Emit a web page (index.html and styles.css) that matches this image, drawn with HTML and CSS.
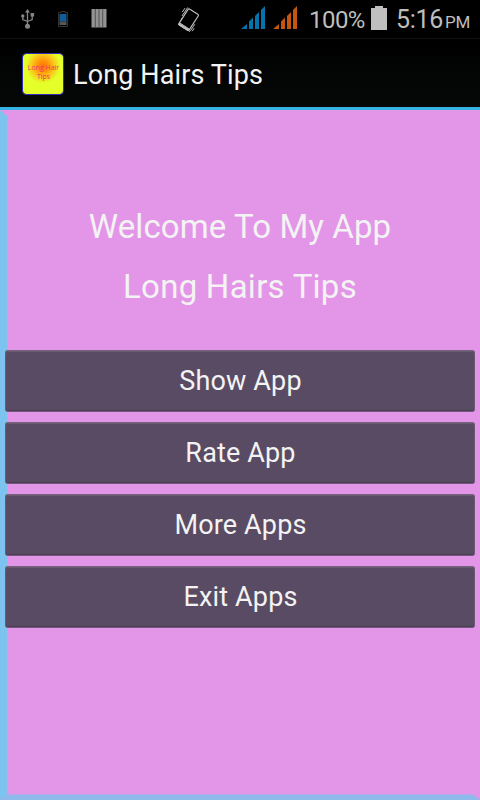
FILE: index.html
```html
<!DOCTYPE html>
<html lang="en">
<head>
<meta charset="utf-8">
<title>Long Hairs Tips</title>
<link rel="stylesheet" href="styles.css">
</head>
<body>
<div class="screen">
  <header class="status">
    <svg class="usb" width="14" height="20" viewBox="0 0 14 20" fill="none" stroke="#858585" stroke-width="1.3">
      <path d="M6.5 2v14M6.5 12.5L1.8 10.5V7M6.5 12.5l4.7-2V6"/>
      <path d="M4 3.5L6.5 0 9 3.5z" fill="#858585" stroke="none"/>
      <circle cx="6.5" cy="17.3" r="2.5" fill="#858585" stroke="none"/>
      <circle cx="1.8" cy="7" r="1.7" fill="#858585" stroke="none"/>
      <path d="M9.6 4h3.5v3.5H9.6z" fill="#858585" stroke="none"/>
    </svg>
    <svg class="cell" width="10" height="16" viewBox="0 0 10 16">
      <path d="M3 .5h4v1h2.5v14H.5v-14H3z" fill="#050505" stroke="#363330" stroke-width="1"/>
      <path d="M1.5 3h7v7.5h-7z" fill="#125c9c"/>
      <path d="M1.5 10.5h7V14h-7z" fill="#555"/>
    </svg>
    <svg class="bars" width="16" height="19" viewBox="0 0 16 19">
      <path d="M.5 0h15v18.5H.5z" fill="#939393"/>
      <path d="M4.3 0v19M8 0v19M11.7 0v19" stroke="#424242" stroke-width=".8"/>
    </svg>
    <svg class="vibrate" width="22" height="26" viewBox="0 0 22 26" fill="none" stroke="#bcbcbc">
      <path d="M11.5 2.1l8.3 5.2q1 .7.4 1.7l-9 13.8q-.7 1-1.7.4L1.4 18q-1-.7-.3-1.7L9.9 2.7q.6-1 1.6-.6z" stroke-width="1.2"/>
      <path d="M1.4 15.7l9.6 6.2-1.1 1.7L.7 17.8z" fill="#bcbcbc"/>
      <path d="M4 9l5.8-8.6M3.3 12.3L3.9 11M4.2 5.2L7 1.1M12.5 23.7l4.3-6.5M14.2 24.2l2-3M11 25l.9-1.3" stroke-width="1"/>
    </svg>
    <svg class="signal" width="24" height="23" viewBox="0 0 24 23" fill="#0674ac"><path d="M0 23l6-5v5zM8 23v-7.5l4-4V23zM14 23V10l4-4v17zM20 23V4l4-4v23z"/></svg>
    <svg class="signal second" width="24" height="23" viewBox="0 0 24 23" fill="#c5560e"><path d="M0 23l6-5v5zM8 23v-7.5l4-4V23zM14 23V10l4-4v17zM20 23V4l4-4v23z"/></svg>
    <span class="percent">100%</span>
    <svg class="battery" width="16" height="24" viewBox="0 0 16 24"><path d="M4 0h8v2h4v22H0V2h4z" fill="#bfbfbf"/></svg>
    <span class="clock">5:16</span><span class="meridiem">PM</span>
  </header>
  <div class="actionbar">
    <div class="logo"><span>Long Hair</span><span>Tips</span></div>
    <h1>Long Hairs Tips</h1>
  </div>
  <main>
    <svg class="edge" width="480" height="690" viewBox="0 0 480 690" aria-hidden="true">
      <path d="M0 0l7 6v679l-7 5z" fill="#7cc3ef"/>
      <path d="M7 684.5h466l7 5.5H0z" fill="#8eb9eb"/>
    </svg>
    <p class="welcome">Welcome To My App</p>
    <p class="name">Long Hairs Tips</p>
    <nav>
      <button class="show">Show App</button>
      <button class="rate">Rate App</button>
      <button class="more">More Apps</button>
      <button class="exit">Exit Apps</button>
    </nav>
  </main>
</div>
</body>
</html>
```
FILE: styles.css
```css
* { box-sizing: border-box; }
body { margin: 0; background: #000; font-family: Roboto, "Liberation Sans", sans-serif; }
svg { display: block; flex: none; }
.screen { width: 480px; height: 800px; overflow: hidden; display: flex; flex-direction: column; }
.status { height: 39px; display: flex; align-items: flex-start; border-bottom: 1px solid #121212; color: #bebebe; white-space: nowrap; }
.status > * { flex: none; }
.usb { margin: 9px 0 0 21px; }
.cell { margin: 11px 0 0 23px; }
.bars { margin: 9px 0 0 23px; }
.vibrate { margin: 7px 0 0 71px; }
.signal { margin: 6px 0 0 41px; }
.signal.second { margin-left: 8px; }
.percent { width: 57px; margin: 6px 0 0 12px; font-size: 24px; line-height: 28px; letter-spacing: -.55px; }
.battery { margin: 6px 0 0 5px; }
.clock { width: 46px; margin: 6px 0 0 9px; font-size: 25px; line-height: 28px; letter-spacing: -.3px; }
.meridiem { margin: 12px 0 0 3px; font-size: 17px; line-height: 20px; letter-spacing: -.3px; }
.actionbar { height: 71px; display: flex; border-bottom: 3px solid #34b3e4; background: linear-gradient(#000, #060808); }
.logo { width: 42px; height: 42px; flex: none; margin: 14px 0 0 22px; padding: 9px 0 0 1px; border: 1px solid #2c2fb4; border-radius: 4px; background: radial-gradient(circle at 50% 30%, #ff7200 0, #ff970c 17%, #f9c91a 33%, #e4ff29 50%) padding-box; color: #f4316a; font: 7px/9px "Open Sans", sans-serif; text-align: center; white-space: nowrap; }
.logo span { display: block; }
h1 { margin: 20px 0 0 9px; color: #f3f3f3; font-size: 27px; font-weight: 400; line-height: 32px; letter-spacing: .12px; }
main { position: relative; flex: 1; background: #e396e8; color: #f3f3f3; text-align: center; }
.edge { position: absolute; inset: 0; }
main p, nav { position: relative; }
main p { margin: 0; font-size: 33px; line-height: 40px; letter-spacing: .1px; }
.welcome { padding-top: 97px; }
main .name { margin-top: 20px; letter-spacing: .25px; }
nav { display: flex; flex-direction: column; gap: 10px; padding: 43px 5px 0; }
button { height: 62px; padding: 0 0 1px 1px; border: 1px solid #70577a; border-top-color: #75627e; border-bottom-color: #75567f; border-radius: 3px; background: #594b63; box-shadow: inset 0 1px #6a5c72, inset 0 -1px #4a3e52; color: #f3f3f3; font: 27px/32px Roboto, "Liberation Sans", sans-serif; letter-spacing: .15px; }
```
